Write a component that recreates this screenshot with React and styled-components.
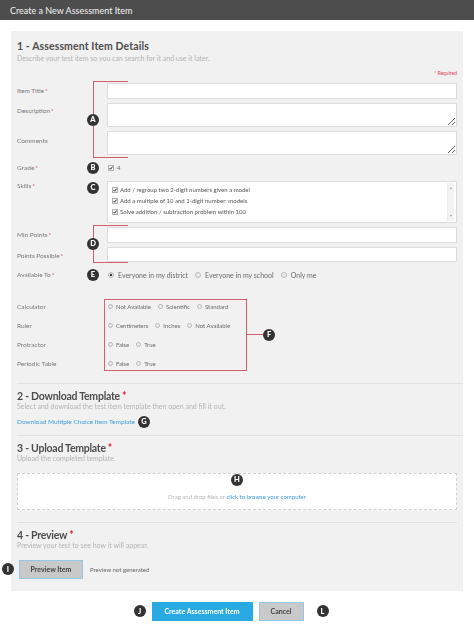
import React from "react";
import styled, { createGlobalStyle } from "styled-components";

const Global = createGlobalStyle`
  html, body { margin: 0; padding: 0; background: #ffffff; }
  body { font-family: Lato, "Open Sans", "Liberation Sans", sans-serif; width: 474px; }
  * { box-sizing: border-box; }
`;

const Page = styled.div`
  width: 474px;
  min-height: 644px;
  background: #ffffff;
`;

const TopBar = styled.header`
  height: 20px;
  background: #4d4d4d;
  display: flex;
  align-items: center;
  padding-left: 10px;
  color: #f3f3f3;
  font-size: 9px;
`;

const Main = styled.main`
  padding: 11px 11px 0;
`;

const Panel = styled.div`
  background: #f1f1f1;
  padding: 9px 6px 12px;
  display: flex;
  flex-direction: column;
`;

const SectionTitle = styled.h2`
  margin: ${(p) => p.$top || 0}px 0 0;
  font-size: 10.5px;
  line-height: 12px;
  font-weight: 700;
  color: #4e4e4e;
  letter-spacing: ${(p) => (p.$wide ? "0.1px" : "-0.25px")};
`;

const Star = styled.span`
  color: #e3132c;
  margin-left: 2px;
`;

const Hint = styled.p`
  margin: ${(p) => p.$gap || 0}px 0 0;
  font-size: 7px;
  line-height: 9px;
  color: #b4b4b4;
`;

const RequiredNote = styled.div`
  margin-top: 6px;
  text-align: right;
  font-size: 5px;
  line-height: 8px;
  color: #e0434f;
`;

const Divider = styled.hr`
  border: none;
  border-top: 1px solid #e0e0e0;
  height: 0;
  margin: ${(p) => p.$top}px ${(p) => (p.$toEdge ? -6 : 0)}px 0 0;
`;

const FormGrid = styled.div`
  display: grid;
  grid-template-columns: 64px 26px 1fr;
  grid-template-rows: 16px 24px 24px 18px 42px 16px 15px 18px;
  row-gap: 4px;
  margin-top: 6px;
`;

const Label = styled.div`
  grid-column: 1;
  grid-row: ${(p) => p.$row};
  align-self: ${(p) => p.$align || "center"};
  padding-top: ${(p) => p.$pt || 0}px;
  font-size: 6.5px;
  line-height: 8px;
  color: #777777;
  white-space: nowrap;
`;

const Req = styled.span`
  color: #e0434f;
  margin-left: 1px;
`;

const Field = styled.div`
  grid-column: 3;
  grid-row: ${(p) => p.$row};
  display: flex;
  align-items: ${(p) => p.$align || "stretch"};
  gap: ${(p) => p.$gap || 0}px;
  padding-left: ${(p) => p.$pl || 0}px;
`;

const TextInput = styled.input`
  width: 100%;
  height: 100%;
  margin: 0;
  border: 1px solid #dcdcdc;
  background: #ffffff;
  padding: 0 4px;
  font: inherit;
  outline: none;
`;

const TextArea = styled.textarea`
  width: 100%;
  height: 100%;
  margin: 0;
  border: 1px solid #dcdcdc;
  background: #ffffff;
  padding: 2px 4px;
  font: inherit;
  resize: vertical;
  outline: none;
`;

const Badge = styled.span`
  width: 12px;
  height: 12px;
  border-radius: 50%;
  background: #333333;
  color: #ffffff;
  font-size: 7.5px;
  font-weight: 900;
  line-height: 1;
  display: inline-flex;
  align-items: center;
  justify-content: center;
  flex: none;
`;

const MarkerCell = styled.div`
  grid-column: 2;
  grid-row: ${(p) => p.$row};
  align-self: ${(p) => p.$align || "center"};
  margin: ${(p) => p.$mt || 0}px 0 0 6px;
  display: flex;
`;

const Bracket = styled.div`
  grid-column: 2 / 4;
  grid-row: ${(p) => p.$rows};
  margin: ${(p) => p.$mt}px 0 ${(p) => p.$mb}px 12px;
  width: 35px;
  border: 1px solid #d2616b;
  border-right: none;
  position: relative;
  pointer-events: none;
`;

const BracketBadge = styled(Badge)`
  position: absolute;
  left: -7px;
  top: 50%;
  transform: translateY(-50%);
`;

const CheckBox = styled.span`
  width: 6px;
  height: 6px;
  border: 1px solid #b0b0b0;
  background: #f4f4f4;
  display: inline-flex;
  align-items: center;
  justify-content: center;
  flex: none;
  svg { display: block; }
`;

const Tick = () => (
  <svg width="6" height="6" viewBox="0 0 10 10">
    <path d="M1.2 5 L4 8 L9 1.5" fill="none" stroke="#1e1e1e" strokeWidth="2.4" />
  </svg>
);

const Check = () => (
  <CheckBox>
    <Tick />
  </CheckBox>
);

const SmallText = styled.span`
  font-size: ${(p) => p.$size || 6}px;
  line-height: 1;
  color: ${(p) => p.$color || "#666"};
  white-space: nowrap;
`;

const SkillsBox = styled.div`
  display: flex;
  border: 1px solid #dcdcdc;
  background: #ffffff;
  width: 100%;
`;

const SkillList = styled.ul`
  list-style: none;
  margin: 0;
  padding: 2px 0 0 4px;
  flex: 1;
`;

const SkillItem = styled.li`
  display: flex;
  align-items: center;
  gap: 2px;
  height: 11px;
  font-size: 6px;
  color: #555555;
`;

const ScrollTrack = styled.div`
  width: 7px;
  margin: 1px 2px 1px 0;
  background: #f3f3f3;
  border-left: 1px solid #ececec;
  display: flex;
  flex-direction: column;
  justify-content: space-between;
  align-items: center;
  padding: 4px 0;
`;

const Arrow = styled.span`
  width: 0;
  height: 0;
  border-left: 1.5px solid transparent;
  border-right: 1.5px solid transparent;
  ${(p) => (p.$down ? "border-top: 2px solid #9a9a9a;" : "border-bottom: 2px solid #9a9a9a;")}
`;

const RadioGroup = styled.div`
  display: flex;
  align-items: center;
  gap: ${(p) => p.$gap || 7}px;
  height: ${(p) => p.$h || 12}px;
  padding-left: ${(p) => p.$pl || 0}px;
`;

const RadioOption = styled.span`
  display: inline-flex;
  align-items: center;
  gap: ${(p) => p.$gap || 3}px;
  font-size: ${(p) => p.$size || 6}px;
  color: #6a6a6a;
  white-space: nowrap;
`;

const RadioDot = styled.span`
  width: ${(p) => p.$d || 5}px;
  height: ${(p) => p.$d || 5}px;
  border-radius: 50%;
  border: 1px solid #b5b5b5;
  background: ${(p) => (p.$on ? "radial-gradient(circle, #3a3a3a 0 1.3px, #f2f2f2 1.6px)" : "#eeeeee")};
  flex: none;
`;

const Radio = ({ on, label, d, size, gap }) => (
  <RadioOption $size={size} $gap={gap}>
    <RadioDot $on={on} $d={d} />
    {label}
  </RadioOption>
);

const ToolsBlock = styled.div`
  display: flex;
  align-items: center;
  margin-top: 15px;
`;

const ToolLabels = styled.div`
  width: 87px;
  align-self: flex-start;
  padding-top: 1px;
  display: flex;
  flex-direction: column;
  gap: 7.33px;
`;

const ToolLabel = styled.span`
  height: 12px;
  display: flex;
  align-items: center;
  font-size: 6.5px;
  color: #777777;
`;

const OptionsBox = styled.div`
  width: 143px;
  border: 1px solid #d2616b;
  padding: 0 4px 0 3px;
  display: flex;
  flex-direction: column;
  gap: 7.33px;
`;

const Connector = styled.span`
  width: 16px;
  height: 1px;
  background: #d2616b;
`;

const LinkRow = styled.div`
  display: flex;
  align-items: center;
  gap: 3px;
  margin-top: 6px;
  height: 10px;
`;

const Link = styled.a`
  font-size: 6.5px;
  color: #3d9be0;
  text-decoration: none;
  white-space: nowrap;
`;

const DropZone = styled.div`
  margin-top: 10px;
  height: 37px;
  border: 1px dashed #d2d2d2;
  background: #ffffff;
  display: flex;
  flex-direction: column;
  align-items: center;
`;

const DropText = styled.div`
  margin-top: 7px;
  font-size: 6px;
  color: #b8b8b8;
  a { color: #3d9be0; text-decoration: none; }
`;

const PreviewRow = styled.div`
  display: flex;
  align-items: center;
  margin: 10px 0 0 -15px;
  gap: 5px;
`;

const Button = styled.button`
  height: 19px;
  width: ${(p) => p.$w}px;
  margin: 0;
  padding: 0;
  border: 1px solid ${(p) => (p.$primary ? "#2aaae2" : "#93c9e4")};
  background: ${(p) => (p.$primary ? "#2aaae2" : "#c9c9c9")};
  color: ${(p) => (p.$primary ? "#ffffff" : "#444444")};
  font-family: inherit;
  font-size: 7px;
  font-weight: 700;
  cursor: pointer;
`;

const PreviewState = styled.span`
  margin-left: 2px;
  font-size: 6px;
  color: #666666;
`;

const Actions = styled.div`
  display: flex;
  justify-content: center;
  align-items: center;
  gap: 6px;
  margin-top: 11px;
  padding-right: 12px;
`;

const Gap = styled.span`
  width: 1px;
`;

export default function App() {
  return (
    <Page>
      <Global />
      <TopBar>Create a New Assessment Item</TopBar>
      <Main>
        <Panel>
          <SectionTitle $wide>1 - Assessment Item Details</SectionTitle>
          <Hint $gap={2}>Describe your test item so you can search for it and use it later.</Hint>
          <RequiredNote>* Required</RequiredNote>

          <FormGrid>
            <Label $row={1}>Item Title<Req>*</Req></Label>
            <Field $row={1}><TextInput /></Field>

            <Label $row={2} $align="start" $pt={4}>Description<Req>*</Req></Label>
            <Field $row={2}><TextArea /></Field>

            <Label $row={3} $align="start" $pt={6}>Comments</Label>
            <Field $row={3}><TextArea /></Field>

            <Bracket $rows="1 / 4" $mt={-2} $mb={-3}>
              <BracketBadge>A</BracketBadge>
            </Bracket>

            <Label $row={4}>Grade<Req>*</Req></Label>
            <MarkerCell $row={4}><Badge>B</Badge></MarkerCell>
            <Field $row={4} $align="center" $gap={3} $pl={1}>
              <Check />
              <SmallText $size={6} $color="#666">4</SmallText>
            </Field>

            <Label $row={5} $align="start" $pt={1}>Skills<Req>*</Req></Label>
            <MarkerCell $row={5} $align="start" $mt={1}><Badge>C</Badge></MarkerCell>
            <Field $row={5}>
              <SkillsBox>
                <SkillList>
                  <SkillItem><Check />Add / regroup two 2-digit numbers given a model</SkillItem>
                  <SkillItem><Check />Add a multiple of 10 and 1-digit number: models</SkillItem>
                  <SkillItem><Check />Solve addition / subtraction problem within 100</SkillItem>
                </SkillList>
                <ScrollTrack>
                  <Arrow />
                  <Arrow $down />
                </ScrollTrack>
              </SkillsBox>
            </Field>

            <Label $row={6}>Min Points<Req>*</Req></Label>
            <Field $row={6}><TextInput /></Field>

            <Label $row={7} $align="start" $pt={5}>Points Possible<Req>*</Req></Label>
            <Field $row={7}><TextInput /></Field>

            <Bracket $rows="6 / 8" $mt={-2} $mb={-1}>
              <BracketBadge>D</BracketBadge>
            </Bracket>

            <Label $row={8}>Available To<Req>*</Req></Label>
            <MarkerCell $row={8}><Badge>E</Badge></MarkerCell>
            <Field $row={8} $align="center" $pl={1}>
              <RadioGroup $gap={7}>
                <Radio on d={6} size={7} gap={4} label="Everyone in my district" />
                <Radio d={6} size={7} gap={4} label="Everyone in my school" />
                <Radio d={6} size={7} gap={4} label="Only me" />
              </RadioGroup>
            </Field>
          </FormGrid>

          <ToolsBlock>
            <ToolLabels>
              <ToolLabel>Calculator</ToolLabel>
              <ToolLabel>Ruler</ToolLabel>
              <ToolLabel>Protractor</ToolLabel>
              <ToolLabel>Periodic Table</ToolLabel>
            </ToolLabels>
            <OptionsBox>
              <RadioGroup>
                <Radio label="Not Available" />
                <Radio label="Scientific" />
                <Radio label="Standard" />
              </RadioGroup>
              <RadioGroup>
                <Radio label="Centimeters" />
                <Radio label="Inches" />
                <Radio label="Not Available" />
              </RadioGroup>
              <RadioGroup>
                <Radio label="False" />
                <Radio label="True" />
              </RadioGroup>
              <RadioGroup>
                <Radio label="False" />
                <Radio label="True" />
              </RadioGroup>
            </OptionsBox>
            <Connector />
            <Badge>F</Badge>
          </ToolsBlock>

          <Divider $top={12} $toEdge />

          <SectionTitle $top={6}>
            2 - Download Template<Star>*</Star>
          </SectionTitle>
          <Hint>Select and download the test item template then open and fill it out.</Hint>
          <LinkRow>
            <Link href="#">Download Multiple Choice Item Template</Link>
            <Badge>G</Badge>
          </LinkRow>

          <Divider $top={8} $toEdge />

          <SectionTitle $top={6}>
            3 - Upload Template<Star>*</Star>
          </SectionTitle>
          <Hint>Upload the completed template.</Hint>
          <DropZone>
            <Badge>H</Badge>
            <DropText>
              Drag and drop files or <a href="#">click to browse your computer</a>
            </DropText>
          </DropZone>

          <Divider $top={12} />

          <SectionTitle $top={6}>
            4 - Preview<Star>*</Star>
          </SectionTitle>
          <Hint>Preview your test to see how it will appear.</Hint>
          <PreviewRow>
            <Badge>I</Badge>
            <Button $w={64}>Preview Item</Button>
            <PreviewState>Preview not generated</PreviewState>
          </PreviewRow>
        </Panel>

        <Actions>
          <Badge>J</Badge>
          <Button $primary $w={101}>Create Assessment Item</Button>
          <Button $w={45}>Cancel</Button>
          <Gap />
          <Badge>L</Badge>
        </Actions>
      </Main>
    </Page>
  );
}
